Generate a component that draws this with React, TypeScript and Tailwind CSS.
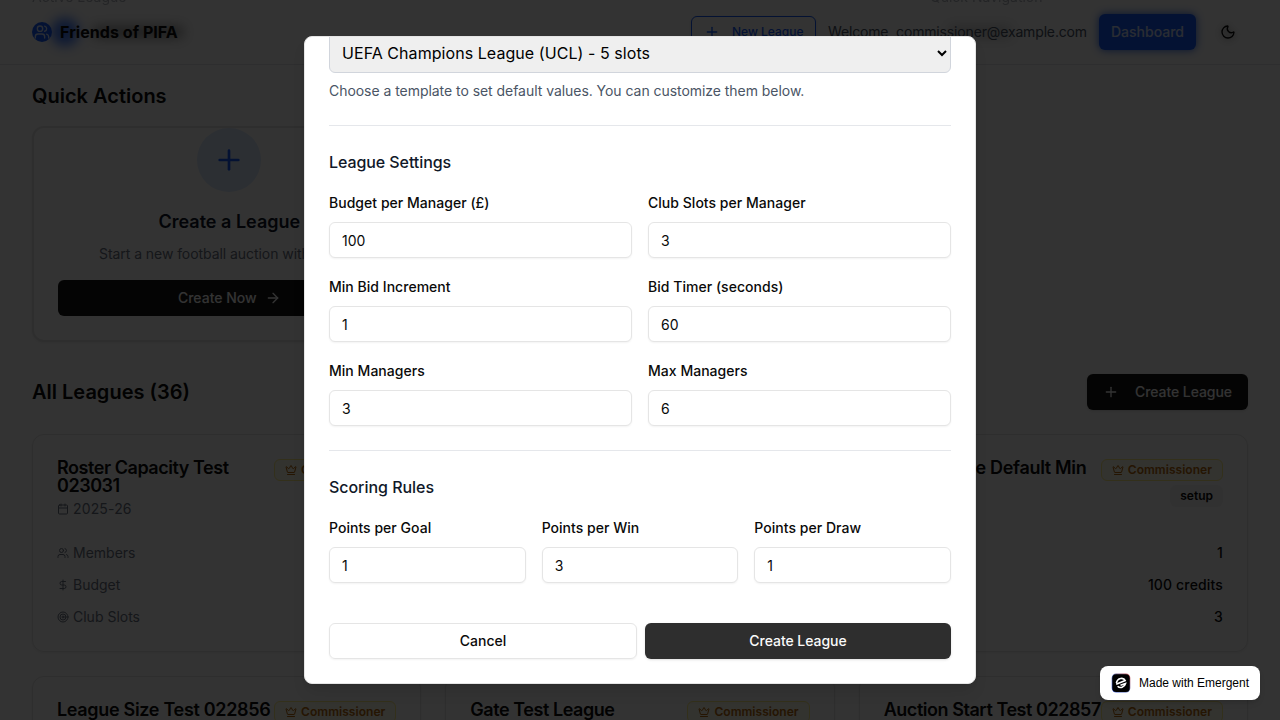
import React from "react";
import { Plus, ArrowRight, Crown, Calendar, Users, DollarSign, Target, Moon } from "lucide-react";

function Commissioner() {
  return (
    <div className="flex h-[22px] items-center rounded-md border border-yellow-200 bg-yellow-50 px-2.5 text-xs font-semibold tracking-[0.04px] text-[#b86a0c]">
      <Crown className="mr-1 size-3" strokeWidth={2} />
      Commissioner
    </div>
  );
}

function Row({ icon, label, value }: { icon: React.ReactNode; label: string; value: string }) {
  return (
    <div className="flex h-5 items-center justify-between text-sm">
      <span className="flex items-center gap-1 text-gray-500">
        {icon}
        {label}
      </span>
      <span className="font-medium tracking-[0.15px]">{value}</span>
    </div>
  );
}

function LeagueCard({ title, wide }: { title: string; wide?: boolean }) {
  return (
    <div className="h-[218px] rounded-xl border border-neutral-200 bg-white p-6 shadow-xs">
      <div className="flex h-[68px] items-start justify-between">
        <div className="w-0 flex-1">
          <h3
            className={
              wide
                ? "text-lg leading-[18px] font-semibold tracking-[-0.32px] whitespace-pre"
                : "text-lg leading-[18px] font-semibold tracking-[-0.45px] whitespace-pre"
            }
          >
            {title}
          </h3>
          <div className="mt-1 flex items-center gap-1 text-sm tracking-[0.15px] text-gray-500">
            <Calendar className="size-3" />
            2025-26
          </div>
        </div>
        <div className="flex shrink-0 flex-col items-end gap-1">
          <Commissioner />
          <div className="flex h-[22px] items-center rounded-md bg-neutral-100 px-2.5 text-xs font-semibold">setup</div>
        </div>
      </div>
      <div className="mt-4 flex flex-col gap-3">
        <Row icon={<Users className="size-3" />} label="Members" value="1" />
        <Row icon={<DollarSign className="size-3" />} label="Budget" value="100 credits" />
        <Row icon={<Target className="size-3" />} label="Club Slots" value="3" />
      </div>
    </div>
  );
}

function Field({ label, value }: { label: string; value: string }) {
  return (
    <label className="flex min-w-0 flex-col gap-[9px]">
      <span className="h-5 text-sm leading-5 font-medium tracking-[0.03px]">{label}</span>
      <input
        defaultValue={value}
        className="h-9 w-full rounded-md border border-neutral-200 bg-white px-3 text-sm shadow-xs outline-none"
      />
    </label>
  );
}

function Header() {
  return (
    <header className="absolute inset-x-0 top-0 flex h-[65px] items-center justify-between border-b border-gray-200 px-8">
      <div className="absolute -top-[13px] left-8 text-sm text-gray-500 opacity-50 blur-[0.7px]">Active League</div>
      <div className="absolute -top-[13px] left-[930px] text-sm text-gray-500 opacity-50 blur-[0.7px]">Quick Navigation</div>
      <div className="flex items-center gap-2">
        <div className="relative flex size-5 items-center justify-center rounded-full bg-blue-600 text-white/80">
          <div className="absolute -top-1 left-[19px] size-7 rounded-full bg-blue-600/80 blur-[6px]" />
          <Users className="relative size-4" strokeWidth={2} />
        </div>
        <div className="relative text-base font-bold tracking-[0.05px]">
          <div className="absolute top-1.5 left-8 h-3 w-[92px] rounded-full bg-black/40 blur-[6px]" />
          <span className="relative">Friends of PIFA</span>
        </div>
      </div>
      <div className="flex items-center">
        <div className="mr-3 flex h-8 w-[125px] items-center rounded-md border border-blue-600 pl-3 text-xs font-medium whitespace-nowrap text-blue-600 shadow-sm">
          <Plus className="mr-3 size-4" />
          New League
        </div>
        <div className="relative mr-3 text-sm tracking-[-0.15px] whitespace-nowrap text-gray-600">
          <div className="absolute top-1 left-[120px] h-3 w-16 rounded-full bg-black/20 blur-[6px]" />
          <span className="relative">Welcome, commissioner@example.com</span>
        </div>
        <div className="flex h-9 items-center rounded-md bg-blue-600 px-3 text-sm font-medium text-white/80 shadow-[0_0_8px_#2563eb]">
          Dashboard
        </div>
        <div className="mr-3 ml-6 flex size-4 items-center justify-center">
          <Moon className="size-4 drop-shadow-[0_1px_3px_#00000080]" />
        </div>
      </div>
    </header>
  );
}

function Dashboard() {
  return (
    <div className="relative h-[720px] overflow-hidden bg-[#fdfdfd] px-8 pt-20">
      <Header />
      <h2 className="text-xl leading-8 font-semibold">Quick Actions</h2>
      <div className="mt-3.5 grid grid-cols-3 gap-4">
        <div className="flex h-[216px] flex-col items-center rounded-xl border-2 border-neutral-200 bg-white px-6 shadow-xs">
          <div className="flex size-16 shrink-0 items-center justify-center rounded-full bg-blue-100 text-blue-600">
            <Plus className="size-8" />
          </div>
          <h3 className="mt-4 text-lg leading-7 font-semibold text-gray-900">Create a League</h3>
          <p className="mt-2 text-sm tracking-[-0.06px] whitespace-nowrap text-gray-500">Start a new football auction with friends</p>
          <div className="mt-4 flex h-9 w-full items-center justify-center rounded-md bg-neutral-900 text-sm font-medium text-white">
            Create Now
            <ArrowRight className="ml-2 size-4" />
          </div>
        </div>
      </div>
      <div className="mt-8 flex h-9 items-center justify-between">
        <h2 className="text-xl font-semibold">All Leagues (36)</h2>
        <div className="flex h-9 items-center rounded-md bg-neutral-900 px-4 text-sm font-medium tracking-[-0.06px] text-white shadow-sm">
          <Plus className="mr-4 size-4" />
          Create League
        </div>
      </div>
      <div className="mt-6 grid grid-cols-3 gap-6">
        <LeagueCard title={"Roster Capacity Test\n023031"} />
        <LeagueCard title="League Test" />
        <LeagueCard title="League Size Default Min" wide />
        <LeagueCard title="League Size Test 022856" wide />
        <LeagueCard title="Gate Test League" />
        <LeagueCard title="Auction Start Test 022857" />
      </div>
    </div>
  );
}

export default function App() {
  return (
    <div className="relative h-[720px] w-[1280px] overflow-hidden font-['Inter',sans-serif] text-neutral-950">
      <Dashboard />
      <div className="absolute inset-0 flex items-center justify-center bg-black/80">
        <div className="flex h-[648px] w-[672px] flex-col overflow-hidden rounded-lg border border-neutral-200 bg-white px-6 shadow-lg">
          <div className="-mt-1 flex h-10 shrink-0 items-center justify-between rounded-b-md border border-gray-300 bg-[#efefef] pr-[3px] pl-3 text-base tracking-[0.06px] text-black">
            UEFA Champions League (UCL) - 5 slots
            <svg className="h-2 w-[10px]" viewBox="0 0 10 8" fill="none" stroke="#000" strokeWidth="2">
              <path d="M1 2 5 6 9 2" />
            </svg>
          </div>
          <p className="mt-2 text-sm tracking-[-0.045px] text-gray-600">
            Choose a template to set default values. You can customize them below.
          </p>
          <div className="mt-6 h-px shrink-0 bg-gray-200" />
          <h3 className="mt-6 text-base font-medium tracking-[-0.08px] text-gray-900">League Settings</h3>
          <div className="mt-[19px] grid grid-cols-2 gap-x-4 gap-y-[19px]">
            <Field label="Budget per Manager (£)" value="100" />
            <Field label="Club Slots per Manager" value="3" />
            <Field label="Min Bid Increment" value="1" />
            <Field label="Bid Timer (seconds)" value="60" />
            <Field label="Min Managers" value="3" />
            <Field label="Max Managers" value="6" />
          </div>
          <div className="mt-6 h-px shrink-0 bg-gray-200" />
          <h3 className="mt-6 text-base font-medium tracking-[-0.04px] text-gray-900">Scoring Rules</h3>
          <div className="mt-[19px] grid grid-cols-3 gap-x-4">
            <Field label="Points per Goal" value="1" />
            <Field label="Points per Win" value="3" />
            <Field label="Points per Draw" value="1" />
          </div>
          <div className="mt-10 flex gap-2 text-sm font-medium">
            <button className="h-9 w-[308px] rounded-md border border-neutral-200 shadow-xs">Cancel</button>
            <button className="h-9 flex-1 rounded-md bg-[#2e2e2e] tracking-[-0.04px] text-neutral-50 shadow-sm">Create League</button>
          </div>
        </div>
      </div>
      <div className="absolute right-5 bottom-5 flex h-[34px] w-40 items-center rounded-lg bg-white pl-[11px] font-['Liberation_Sans',sans-serif] text-xs text-black shadow-md">
        <svg className="mr-2 size-5" viewBox="0 0 20 20" fill="none">
          <defs>
            <linearGradient id="rim" x1="0" y1="1" x2="1" y2="0">
              <stop offset="0" stopColor="#3b5bdb" />
              <stop offset="0.5" stopColor="#5b6fae" />
              <stop offset="1" stopColor="#d9534f" />
            </linearGradient>
          </defs>
          <rect x="0.7" y="0.5" width="18.6" height="19" rx="4.5" fill="url(#rim)" />
          <rect x="1.3" y="1.2" width="17.4" height="17.8" rx="4" fill="#000" />
          <path
            d="M5.2 11.2 14.2 7.6C12.8 4.2 6.4 4.4 5.4 10.2M6.6 13.2C9 15.6 13.6 14.6 14.6 10.4L9.5 12.3"
            stroke="#fff"
            strokeWidth="1.6"
          />
        </svg>
        Made with Emergent
      </div>
    </div>
  );
}
